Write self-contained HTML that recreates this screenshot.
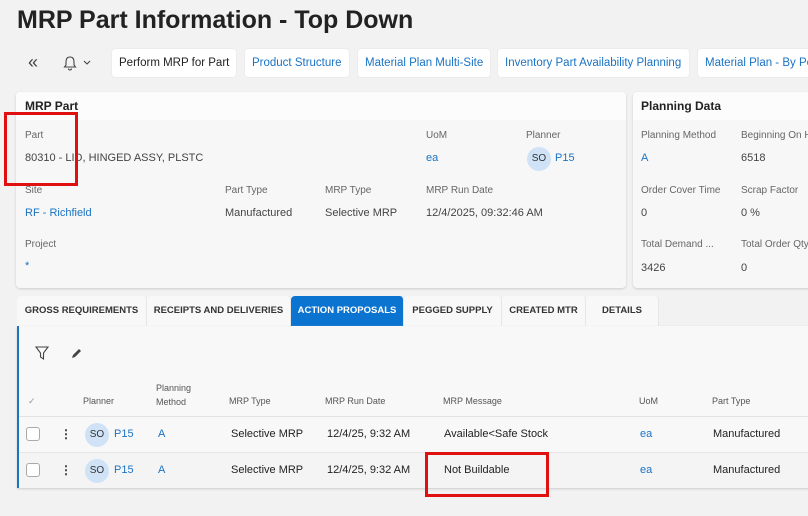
<!DOCTYPE html>
<html><head><style>
*{margin:0;padding:0;box-sizing:border-box}
body{width:808px;height:516px;overflow:hidden;background:#f2f2f3;font-family:"Liberation Sans",sans-serif;position:relative;color:#333}
.a{position:absolute;white-space:nowrap}
.t{font-size:11px;color:#444}
.l{font-size:10px;color:#666}
.lnk{color:#1a73c4}
.btn{position:absolute;top:49px;height:28px;background:#fff;border-radius:3px;font-size:11.5px;line-height:28px;padding:0 7px;color:#1a73c4;box-shadow:0 0 1px #ccc;white-space:nowrap;overflow:hidden}
.card{position:absolute;background:#f7f7f7;border-radius:4px;box-shadow:0 1px 2px #ccc}
.tab{position:absolute;top:296px;height:30px;background:#f8f8f8;font-size:9.5px;font-weight:bold;line-height:30px;text-align:center;color:#333;border-radius:4px 4px 0 0;border-right:1px solid #e6e6e6;white-space:nowrap}
.av{position:absolute;width:24px;height:24px;border-radius:50%;background:#cfe2f6;font-size:10px;line-height:24px;text-align:center;color:#333}
.cb{position:absolute;width:14px;height:14px;border:1px solid #aaa;border-radius:3px;background:#fff}
.red{position:absolute;border:3px solid #e01010}
</style></head><body>
<div class="a" style="left:17px;top:6px;font-size:25px;font-weight:bold;color:#222">MRP Part Information - Top Down</div>
<div class="a" style="left:28px;top:52px;font-size:18px;color:#444">«</div>
<svg class="a" style="left:63px;top:55px" width="30" height="16"><path d="M7 2c-3 0-4 2-4 5v3l-1.5 2h11L11 10V7c0-3-1-5-4-5zM5.5 13.5a1.5 1.5 0 0 0 3 0" fill="none" stroke="#444" stroke-width="1.1"/><path d="M21 6l3 3 3-3" fill="none" stroke="#444" stroke-width="1.1"/></svg>
<div class="btn" style="left:112px;width:124px;color:#222">Perform MRP for Part</div>
<div class="btn" style="left:245px;width:104px">Product Structure</div>
<div class="btn" style="left:358px;width:132px">Material Plan Multi-Site</div>
<div class="btn" style="left:498px;width:191px">Inventory Part Availability Planning</div>
<div class="btn" style="left:698px;width:130px">Material Plan - By Period</div>

<div class="card" style="left:16px;top:92px;width:610px;height:196px"><div style="height:28px;background:#fcfcfc;border-radius:4px 4px 0 0"></div></div>
<div class="a" style="left:25px;top:99px;font-size:12px;font-weight:bold;color:#222">MRP Part</div>
<div class="a l" style="left:25px;top:130px">Part</div>
<div class="a t" style="left:25px;top:152px">80310 - LID, HINGED ASSY, PLSTC</div>
<div class="a l" style="left:426px;top:130px">UoM</div><div class="a t lnk" style="left:426px;top:152px">ea</div>
<div class="a l" style="left:526px;top:130px">Planner</div>
<div class="av" style="left:527px;top:147px">SO</div><div class="a t lnk" style="left:555px;top:152px">P15</div>
<div class="a l" style="left:25px;top:185px">Site</div><div class="a t lnk" style="left:25px;top:207px">RF - Richfield</div>
<div class="a l" style="left:225px;top:185px">Part Type</div><div class="a t" style="left:225px;top:207px">Manufactured</div>
<div class="a l" style="left:325px;top:185px">MRP Type</div><div class="a t" style="left:325px;top:207px">Selective MRP</div>
<div class="a l" style="left:426px;top:185px">MRP Run Date</div><div class="a t" style="left:426px;top:207px">12/4/2025, 09:32:46 AM</div>
<div class="a l" style="left:25px;top:239px">Project</div><div class="a t lnk" style="left:25px;top:260px">*</div>

<div class="card" style="left:633px;top:92px;width:190px;height:196px"><div style="height:28px;background:#fcfcfc;border-radius:4px 4px 0 0"></div></div>
<div class="a" style="left:641px;top:99px;font-size:12px;font-weight:bold;color:#222">Planning Data</div>
<div class="a l" style="left:641px;top:130px">Planning Method</div><div class="a t lnk" style="left:641px;top:152px">A</div>
<div class="a l" style="left:741px;top:130px">Beginning On Hand</div><div class="a t" style="left:741px;top:152px">6518</div>
<div class="a l" style="left:641px;top:185px">Order Cover Time</div><div class="a t" style="left:641px;top:207px">0</div>
<div class="a l" style="left:741px;top:185px">Scrap Factor</div><div class="a t" style="left:741px;top:207px">0 %</div>
<div class="a l" style="left:641px;top:239px">Total Demand ...</div><div class="a t" style="left:641px;top:262px">3426</div>
<div class="a l" style="left:741px;top:239px">Total Order Qty</div><div class="a t" style="left:741px;top:262px">0</div>

<div class="tab" style="left:17px;width:130px">GROSS REQUIREMENTS</div>
<div class="tab" style="left:147px;width:144px">RECEIPTS AND DELIVERIES</div>
<div class="tab" style="left:291px;width:113px;background:#0b74d0;color:#fff">ACTION PROPOSALS</div>
<div class="tab" style="left:404px;width:98px">PEGGED SUPPLY</div>
<div class="tab" style="left:502px;width:84px">CREATED MTR</div>
<div class="tab" style="left:586px;width:73px">DETAILS</div>

<div class="a" style="left:17px;top:326px;width:800px;height:162px;background:#f8f8f8;border-left:2px solid #1a73c4;box-shadow:0 1px 2px #ccc"></div>
<svg class="a" style="left:35px;top:345px" width="60" height="16"><path d="M1 2h12L8.5 8v6L5.5 12V8z" fill="none" stroke="#444" stroke-width="1.1"/><path d="M37 13l1-3 6-6 2 2-6 6z" fill="#444"/></svg>
<div class="a" style="left:28px;top:396px;font-size:9px;color:#999">✓</div>
<div class="a" style="left:83px;top:396px;font-size:9px;color:#555">Planner</div>
<div class="a" style="left:156px;top:381px;font-size:9px;color:#555;line-height:14px">Planning<br>Method</div>
<div class="a" style="left:229px;top:396px;font-size:9px;color:#555">MRP Type</div>
<div class="a" style="left:325px;top:396px;font-size:9px;color:#555">MRP Run Date</div>
<div class="a" style="left:443px;top:396px;font-size:9px;color:#555">MRP Message</div>
<div class="a" style="left:639px;top:396px;font-size:9px;color:#555">UoM</div>
<div class="a" style="left:712px;top:396px;font-size:9px;color:#555">Part Type</div>
<div class="a" style="left:19px;top:416px;width:790px;height:1px;background:#e2e2e2"></div>
<div class="a" style="left:19px;top:452px;width:790px;height:1px;background:#e6e6e6"></div>
<div class="a" style="left:19px;top:453px;width:790px;height:35px;background:#f4f4f4"></div>

<div class="cb" style="left:26px;top:427px"></div><div class="a" style="left:60px;top:427px;font-size:12px;font-weight:bold">⋮</div>
<div class="av" style="left:85px;top:423px">SO</div><div class="a t lnk" style="left:114px;top:428px">P15</div>
<div class="a t lnk" style="left:158px;top:428px">A</div>
<div class="a t" style="left:231px;top:428px;color:#222">Selective MRP</div>
<div class="a t" style="left:327px;top:428px;color:#222">12/4/25, 9:32 AM</div>
<div class="a t" style="left:444px;top:428px;color:#222">Available&lt;Safe Stock</div>
<div class="a t lnk" style="left:640px;top:428px">ea</div>
<div class="a t" style="left:713px;top:428px;color:#222">Manufactured</div>

<div class="cb" style="left:26px;top:463px"></div><div class="a" style="left:60px;top:463px;font-size:12px;font-weight:bold">⋮</div>
<div class="av" style="left:85px;top:459px">SO</div><div class="a t lnk" style="left:114px;top:464px">P15</div>
<div class="a t lnk" style="left:158px;top:464px">A</div>
<div class="a t" style="left:231px;top:464px;color:#222">Selective MRP</div>
<div class="a t" style="left:327px;top:464px;color:#222">12/4/25, 9:32 AM</div>
<div class="a t" style="left:444px;top:464px;color:#222">Not Buildable</div>
<div class="a t lnk" style="left:640px;top:464px">ea</div>
<div class="a t" style="left:713px;top:464px;color:#222">Manufactured</div>

<div class="red" style="left:4px;top:112px;width:74px;height:74px"></div>
<div class="red" style="left:425px;top:452px;width:124px;height:45px"></div>
</body></html>
